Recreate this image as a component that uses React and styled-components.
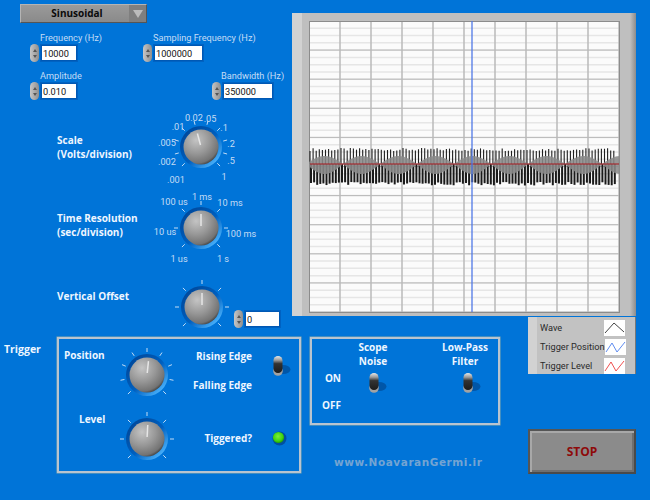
import styled, { createGlobalStyle } from "styled-components";

const SMALL_FONT = `"Roboto", "Open Sans", sans-serif`;

const GlobalStyle = createGlobalStyle`
  html, body { margin: 0; padding: 0; background: #0074d8; }
  body { font-family: "Open Sans", "Noto Sans", sans-serif; }
`;

const Page = styled.div`
  width: 650px;
  height: 500px;
  overflow: hidden;
  background: #0074d8;
  display: grid;
  grid-template-columns: 292px 236px 108px;
  grid-template-rows: 317px 20px 1fr;
`;

const LeftColumn = styled.div`
  grid-column: 1;
  grid-row: 1 / 3;
  padding-top: 4px;
`;

const Dropdown = styled.div`
  width: 127px;
  height: 19px;
  margin-left: 20px;
  box-sizing: border-box;
  display: flex;
  background: linear-gradient(#9a9a9a, #8a8a8a);
  border: 1px solid;
  border-color: #b4b4b4 #555 #555 #b4b4b4;
`;

const DropdownText = styled.div`
  flex: 1;
  padding-left: 4px;
  text-align: center;
  font-size: 10px;
  font-weight: 700;
  line-height: 17px;
  color: #0a0a0a;
`;

const DropdownArrow = styled.div`
  width: 17px;
  background: #7f7f7f;
  display: flex;
  align-items: center;
  justify-content: center;
  &::after {
    content: "";
    border-left: 5px solid transparent;
    border-right: 5px solid transparent;
    border-top: 8px solid #bcbcbc;
  }
`;

const FieldRow = styled.div`
  display: flex;
  padding-left: 30px;
  margin-top: ${(p) => p.$top}px;
`;

const Field = styled.div`
  width: ${(p) => p.$width || "auto"};
`;

const FieldLabel = styled.div`
  padding-left: ${(p) => p.$indent ?? 10}px;
  font-family: ${SMALL_FONT};
  font-size: 9.2px;
  line-height: 12px;
  white-space: nowrap;
  color: #c4dcf5;
`;

const FieldControl = styled.div`
  display: flex;
  align-items: center;
  gap: 2px;
`;

const Spinner = styled.div`
  width: 9px;
  height: 18px;
  border-radius: 5px;
  background: linear-gradient(90deg, #c6c6c6, #8e8e8e);
  display: flex;
  flex-direction: column;
  align-items: center;
  justify-content: center;
  gap: 3px;
  &::before,
  &::after {
    content: "";
    border-left: 2px solid transparent;
    border-right: 2px solid transparent;
  }
  &::before { border-bottom: 3px solid #555; }
  &::after { border-top: 3px solid #555; }
`;

const NumberInput = styled.input`
  width: ${(p) => p.$width}px;
  height: 16px;
  box-sizing: border-box;
  padding: 0 0 0 1px;
  border: 1px solid #0058b4;
  outline: 1px solid #0062c2;
  background: #fff;
  font: 9.2px ${SMALL_FONT};
  color: #111;
`;

const KnobRow = styled.div`
  display: flex;
  height: ${(p) => p.$height}px;
  margin-top: ${(p) => p.$top || 0}px;
`;

const KnobTitle = styled.div`
  width: 88px;
  padding: ${(p) => p.$top}px 0 0 57px;
  font-size: 10px;
  font-weight: 700;
  line-height: 14px;
  white-space: nowrap;
  color: #eef6ff;
`;

const OffsetField = styled.div`
  margin-top: 41px;
  margin-left: 1px;
`;

const DialLabel = styled.text`
  font-family: ${SMALL_FONT};
  font-size: 9.2px;
  fill: #c4dcf5;
  text-anchor: middle;
  dominant-baseline: central;
`;

const HiddenDefs = styled.svg`
  position: absolute;
  width: 0;
  height: 0;
`;

const GraphFrame = styled.div`
  grid-column: 2 / 4;
  grid-row: 1;
  margin-top: 13px;
  height: 303px;
  box-sizing: border-box;
  padding: 8px 17px 4px 17px;
  background:
    linear-gradient(90deg, #d2d2d2 0, #d2d2d2 10px, #bfbfbf 10px, #bfbfbf calc(100% - 6px), #8c8c8c 100%);
`;

const LegendColumn = styled.div`
  grid-column: 3;
  grid-row: 2 / 4;
  display: flex;
  flex-direction: column;
  gap: 55px;
`;

const Legend = styled.div`
  height: 57px;
  box-sizing: border-box;
  padding: 2px 10px 0 12px;
  display: flex;
  flex-direction: column;
  gap: 2px;
  background: linear-gradient(90deg, #d2d2d2 0, #d2d2d2 9px, #c2c2c2 9px);
  border-right: 1px solid #777;
`;

const LegendRow = styled.div`
  display: flex;
  align-items: center;
  justify-content: space-between;
  height: 17px;
  font-family: ${SMALL_FONT};
  font-size: 9.2px;
  white-space: nowrap;
  color: #2a2a2a;
`;

const LegendSwatch = styled.svg`
  width: 21px;
  height: 16px;
  background: #fff;
  flex: none;
`;

const StopButton = styled.button`
  height: 45px;
  padding: 0;
  box-sizing: border-box;
  border: 2px solid;
  border-color: #555 #4a4a4a #4a4a4a #555;
  box-shadow: inset 2px 2px 0 #a8a8a8, inset -2px -2px 0 #6f6f6f;
  background: #8b8b8b;
  font: 700 12px "Open Sans", sans-serif;
  color: #8e0a0a;
`;

const BottomArea = styled.div`
  grid-column: 1 / 3;
  grid-row: 3;
  display: flex;
  align-items: flex-start;
`;

const TriggerTitle = styled.div`
  width: 57px;
  padding: 5px 0 0 4px;
  box-sizing: border-box;
  font-size: 10.5px;
  font-weight: 700;
  line-height: 14px;
  color: #eef6ff;
`;

const Panel = styled.div`
  box-sizing: border-box;
  border: 2px solid #b9c4cf;
  box-shadow: 0 0 0 0.5px #8aa;
`;

const TriggerPanel = styled(Panel)`
  width: 244px;
  height: 136px;
  padding-top: 4px;
  display: grid;
  grid-template-columns: 58px 60px 75px 1fr;
  grid-template-rows: 64px 64px;
`;

const PanelLabel = styled.div`
  font-size: 10px;
  font-weight: 700;
  line-height: 14px;
  white-space: nowrap;
  color: #eef6ff;
  text-align: ${(p) => p.$align || "left"};
  padding-left: ${(p) => p.$indent || 0}px;
  margin-top: ${(p) => p.$top || 0}px;
`;

const EdgeLabels = styled.div`
  display: flex;
  flex-direction: column;
  gap: 15px;
  padding-top: 6px;
`;

const IndicatorCell = styled.div`
  display: flex;
  justify-content: flex-start;
  align-items: flex-start;
  padding: ${(p) => p.$top}px 0 0 ${(p) => p.$left}px;
`;

const RightBottom = styled.div`
  margin-left: 9px;
`;

const NoisePanel = styled(Panel)`
  width: 190px;
  height: 88px;
  display: grid;
  grid-template-columns: 32px 58px 34px 58px;
  grid-template-rows: 31px 1fr;
`;

const OnOffLabels = styled.div`
  grid-column: 1;
  grid-row: 2;
  display: flex;
  flex-direction: column;
  gap: 13px;
  padding: 1px 3px 0 0;
  align-items: flex-end;
`;

const NoiseHeader = styled(PanelLabel)`
  text-align: center;
  padding-top: 1px;
`;

const SwitchCell = styled.div`
  padding: 2px 0 0 ${(p) => p.$left}px;
`;

const Watermark = styled.div`
  margin: 31px 0 0 24px;
  font-family: "DejaVu Sans", sans-serif;
  font-size: 10.5px;
  font-weight: 700;
  letter-spacing: 0.55px;
  white-space: nowrap;
  color: #74a4d2;
`;

const range = (start, step, count) => Array.from({ length: count }, (_, i) => start + i * step);

const Knob = ({ width, height, cx, cy, ticks, angle = 0, labels = [] }) => {
  const rad = ((angle - 90) * Math.PI) / 180;
  return (
    <svg width={width} height={height} viewBox={`0 0 ${width} ${height}`}>
      <circle cx={cx} cy={cy} r={21} fill="url(#knobHalo)" />
      {ticks.map((t) => {
        const a = ((t - 90) * Math.PI) / 180;
        return (
          <line
            key={t}
            x1={cx + 23 * Math.cos(a)}
            y1={cy + 23 * Math.sin(a)}
            x2={cx + 27 * Math.cos(a)}
            y2={cy + 27 * Math.sin(a)}
            stroke="#c4dcf5"
            strokeWidth="1"
          />
        );
      })}
      <circle cx={cx} cy={cy} r={17.5} fill="url(#knobBody)" />
      <line
        x1={cx + 2 * Math.cos(rad)}
        y1={cy + 2 * Math.sin(rad)}
        x2={cx + 14 * Math.cos(rad)}
        y2={cy + 14 * Math.sin(rad)}
        stroke="#e6e6e6"
        strokeWidth="1.5"
      />
      {labels.map(([text, dx, dy]) => (
        <DialLabel key={text} x={cx + dx} y={cy + dy}>
          {text}
        </DialLabel>
      ))}
    </svg>
  );
};

const ToggleSwitch = () => (
  <svg width="26" height="22" viewBox="0 0 26 22">
    <ellipse cx="12" cy="14.5" rx="7.5" ry="4.5" fill="#0056a8" />
    <circle cx="7" cy="16" r="4.8" fill="#a2a2a2" />
    <rect x="2.5" y="1" width="9" height="17" rx="4.5" fill="url(#switchBody)" />
  </svg>
);

const Led = () => (
  <svg width="16" height="16" viewBox="0 0 16 16">
    <circle cx="8.5" cy="8.5" r="7" fill="#0050a0" />
    <circle cx="7.5" cy="7.5" r="5.6" fill="url(#ledGlow)" />
  </svg>
);

const scaleLabels = [
  [".001", -25, 32],
  [".002", -34, 14],
  [".005", -34, -5],
  [".01", -23, -21],
  ["0.02", -7, -30],
  [".05", 9, -29],
  [".1", 23, -20],
  [".2", 30, -4],
  [".5", 30, 13],
  ["1", 23, 29],
];

const timeLabels = [
  ["1 us", -22, 30],
  ["10 us", -36, 3],
  ["100 us", -27, -27],
  ["1 ms", 1, -32],
  ["10 ms", 29, -26],
  ["100 ms", 40, 5],
  ["1 s", 22, 30],
];

// wave form: thin bars on top, thick below, grey lobes and the red trigger level through it
const pseudo = (i) => {
  const s = Math.sin(i * 12.9898) * 43758.5453;
  return s - Math.floor(s);
};

const PLOT_W = 310;
const PLOT_H = 291;
const WAVE_Y = 143;

const lobes = () => {
  const xs = range(0, 1, PLOT_W + 1);
  const lobe = (x) => Math.abs(Math.sin(((x + 3) * Math.PI) / 37));
  const top = xs.map((x) => `${x},${WAVE_Y - 8 * lobe(x)}`);
  const bottom = xs.reverse().map((x) => `${x},${WAVE_Y + 10 * lobe(x)}`);
  return [...top, ...bottom].join(" ");
};

const Plot = () => (
  <svg width={PLOT_W + 1} height={PLOT_H + 1} viewBox={`0 0 ${PLOT_W + 1} ${PLOT_H + 1}`} style={{ display: "block" }}>
    <rect width={PLOT_W + 1} height={PLOT_H + 1} fill="#fbfbfb" />
    {range(0, 7.275, 41).map((y) => (
      <line key={y} x1="0" x2={PLOT_W} y1={y} y2={y} stroke="#e6e6e6" strokeWidth="1.5" />
    ))}
    {range(0, 29.1, 11).map((y) => (
      <line key={y} x1="0" x2={PLOT_W} y1={y} y2={y} stroke="#b8b8b8" strokeWidth="1" />
    ))}
    {range(0, 31, 11).map((x) => (
      <line key={x} x1={x} x2={x} y1="0" y2={PLOT_H} stroke="#bababa" strokeWidth="1.5" />
    ))}
    <rect x="0.5" y="0.5" width={PLOT_W} height={PLOT_H} fill="none" stroke="#8c8c8c" />
    {range(1, 3.1, 99).map((x, i) => (
      <g key={x}>
        <line
          x1={x}
          x2={x}
          y1={WAVE_Y - 13 - pseudo(i) * 3}
          y2={WAVE_Y}
          stroke="#1e1e1e"
          strokeWidth="1.1"
        />
        <line
          x1={x + 1}
          x2={x + 1}
          y1={WAVE_Y}
          y2={WAVE_Y + 18 + pseudo(i + 50) * 3.5}
          stroke="#1a1a1a"
          strokeWidth="2"
        />
      </g>
    ))}
    <polygon points={lobes()} fill="#8a8a8a" opacity="0.88" />
    <line x1="1" x2={PLOT_W} y1={WAVE_Y} y2={WAVE_Y} stroke="#a8161c" strokeWidth="1.2" />
    <line x1="163" x2="163" y1="0" y2={PLOT_H} stroke="#4f78e6" strokeWidth="1.3" />
  </svg>
);

const LegendTrace = ({ color, points }) => (
  <LegendSwatch viewBox="0 0 21 16">
    <polyline points={points} fill="none" stroke={color} strokeWidth="1" />
  </LegendSwatch>
);

const NumericField = ({ label, value, inputWidth, width, indent }) => (
  <Field $width={width}>
    {label && <FieldLabel $indent={indent}>{label}</FieldLabel>}
    <FieldControl>
      <Spinner />
      <NumberInput readOnly value={value} $width={inputWidth} />
    </FieldControl>
  </Field>
);

const App = () => {
  return (
    <Page>
      <GlobalStyle />
      <HiddenDefs aria-hidden="true">
        <defs>
          <linearGradient id="knobHalo" x1="0.15" y1="0.15" x2="0.85" y2="0.85">
            <stop offset="0" stopColor="#004a9e" />
            <stop offset="0.55" stopColor="#0060c0" />
            <stop offset="1" stopColor="#45adf8" />
          </linearGradient>
          <radialGradient id="knobBody" cx="0.36" cy="0.3" r="0.78">
            <stop offset="0" stopColor="#c4c4c4" />
            <stop offset="0.5" stopColor="#979797" />
            <stop offset="0.85" stopColor="#737373" />
            <stop offset="1" stopColor="#2c2c2c" />
          </radialGradient>
          <linearGradient id="switchBody" x1="0" y1="0" x2="0" y2="1">
            <stop offset="0" stopColor="#e8e8e8" />
            <stop offset="0.25" stopColor="#9a9a9a" />
            <stop offset="0.45" stopColor="#333" />
            <stop offset="1" stopColor="#1c1c1c" />
          </linearGradient>
          <radialGradient id="ledGlow" cx="0.45" cy="0.4" r="0.6">
            <stop offset="0" stopColor="#7cf03a" />
            <stop offset="0.7" stopColor="#3fd410" />
            <stop offset="1" stopColor="#1f9a08" />
          </radialGradient>
        </defs>
      </HiddenDefs>

      <LeftColumn>
        <Dropdown>
          <DropdownText>Sinusoidal</DropdownText>
          <DropdownArrow />
        </Dropdown>
        <FieldRow $top={9}>
          <NumericField label="Frequency (Hz)" value="10000" inputWidth={36} width="113px" />
          <NumericField label="Sampling Frequency (Hz)" value="1000000" inputWidth={49} />
        </FieldRow>
        <FieldRow $top={8}>
          <NumericField label="Amplitude" value="0.010" inputWidth={36} width="182px" />
          <NumericField label="Bandwidth (Hz)" value="350000" inputWidth={50} indent={9} />
        </FieldRow>
        <KnobRow $height={80} $top={7}>
          <KnobTitle $top={26}>
            Scale
            <br />
            (Volts/division)
          </KnobTitle>
          <Knob width={120} height={80} cx={56} cy={40} ticks={range(-135, 30, 10)} angle={-15} labels={scaleLabels} />
        </KnobRow>
        <KnobRow $height={82}>
          <KnobTitle $top={24}>
            Time Resolution
            <br />
            (sec/division)
          </KnobTitle>
          <Knob width={120} height={82} cx={56} cy={41} ticks={range(-135, 45, 7)} labels={timeLabels} />
        </KnobRow>
        <KnobRow $height={66}>
          <KnobTitle $top={20}>Vertical Offset</KnobTitle>
          <Knob width={88} height={66} cx={57} cy={38} ticks={range(-135, 45, 7)} />
          <OffsetField>
            <NumericField value="0" inputWidth={35} />
          </OffsetField>
        </KnobRow>
      </LeftColumn>

      <GraphFrame>
        <Plot />
      </GraphFrame>

      <LegendColumn>
        <Legend>
          <LegendRow>
            Wave
            <LegendTrace color="#444" points="1,13 10,3 20,12" />
          </LegendRow>
          <LegendRow>
            Trigger Position
            <LegendTrace color="#5f8cf0" points="1,13 7,4 12,13 20,3" />
          </LegendRow>
          <LegendRow>
            Trigger Level
            <LegendTrace color="#f05050" points="1,13 7,4 12,13 20,3" />
          </LegendRow>
        </Legend>
        <StopButton>STOP</StopButton>
      </LegendColumn>

      <BottomArea>
        <TriggerTitle>Trigger</TriggerTitle>
        <TriggerPanel>
          <PanelLabel $indent={5} $top={5}>
            Position
          </PanelLabel>
          <Knob width={60} height={64} cx={30} cy={32} ticks={range(-135, 33.75, 9)} angle={6} />
          <EdgeLabels>
            <PanelLabel $align="right">Rising Edge</PanelLabel>
            <PanelLabel $align="right">Falling Edge</PanelLabel>
          </EdgeLabels>
          <IndicatorCell $top={12} $left={19}>
            <ToggleSwitch />
          </IndicatorCell>
          <PanelLabel $indent={20} $top={5}>
            Level
          </PanelLabel>
          <Knob width={60} height={64} cx={30} cy={32} ticks={range(-135, 45, 7)} angle={3} />
          <PanelLabel $align="right" $top={24}>
            Tiggered?
          </PanelLabel>
          <IndicatorCell $top={23} $left={19}>
            <Led />
          </IndicatorCell>
        </TriggerPanel>
        <RightBottom>
          <NoisePanel>
            <span />
            <NoiseHeader>
              Scope
              <br />
              Noise
            </NoiseHeader>
            <span />
            <NoiseHeader>
              Low-Pass
              <br />
              Filter
            </NoiseHeader>
            <OnOffLabels>
              <PanelLabel>ON</PanelLabel>
              <PanelLabel>OFF</PanelLabel>
            </OnOffLabels>
            <SwitchCell $left={23}>
              <ToggleSwitch />
            </SwitchCell>
            <span />
            <SwitchCell $left={25}>
              <ToggleSwitch />
            </SwitchCell>
          </NoisePanel>
          <Watermark>www.NoavaranGermi.ir</Watermark>
        </RightBottom>
      </BottomArea>
    </Page>
  );
};

export default App;
